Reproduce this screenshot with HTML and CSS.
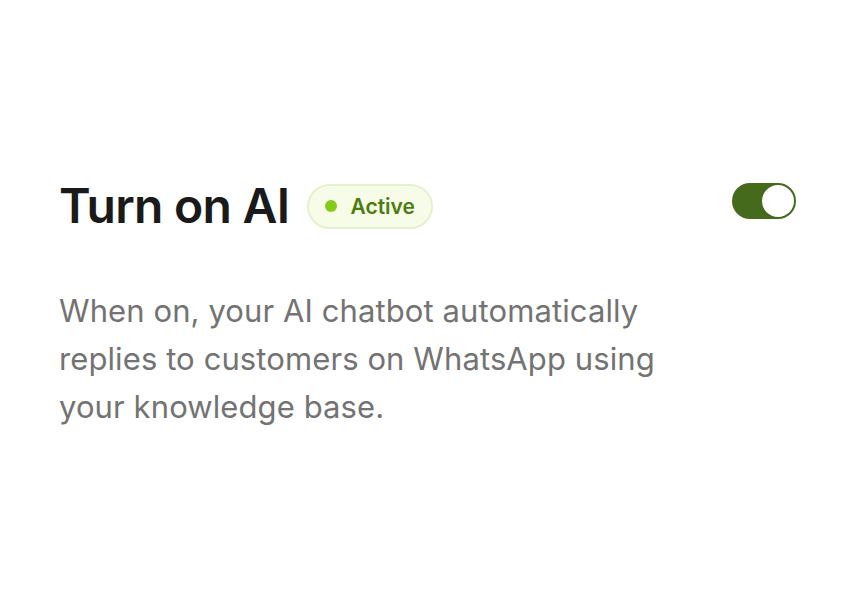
FILE: index.html
```html
<!DOCTYPE html>
<html lang="en">
<head>
  <meta charset="UTF-8">
  <title>AI Settings</title>
  <link rel="stylesheet" href="styles.css">
</head>
<body>
  <div class="setting-card">
    <div class="setting-head">
      <div class="title-group">
        <h1 class="setting-title">Turn on AI</h1>
        <span class="status-badge"><span class="status-dot"></span>Active</span>
      </div>
      <button class="toggle is-on" aria-label="Turn on AI"><span class="toggle-knob"></span></button>
    </div>
    <p class="setting-desc">When on, your AI chatbot automatically replies to customers on WhatsApp using your knowledge base.</p>
  </div>
</body>
</html>
```

FILE: styles.css
```css
body {
  margin: 0;
  background: #fff;
  font-family: 'Inter', 'Noto Sans', sans-serif;
}
.setting-card {
  padding: 177px 56px 0 59px;
}
.setting-head {
  display: flex;
  justify-content: space-between;
  align-items: flex-start;
}
.title-group {
  display: flex;
  align-items: center;
  gap: 18px;
}
.setting-title {
  margin: 0;
  font-size: 48px;
  font-weight: 600;
  line-height: 58px;
  color: #1a1a1a;
  letter-spacing: -0.7px;
}
.status-badge {
  display: inline-flex;
  align-items: center;
  gap: 13px;
  padding: 6px 16px;
  border: 2px solid #e4f2cc;
  border-radius: 999px;
  background: #f7fce9;
  color: #4d7c0f;
  font-size: 21px;
  font-weight: 600;
  line-height: 29px;
}
.status-dot {
  width: 12px;
  height: 12px;
  border-radius: 50%;
  background: #84cc16;
}
.toggle {
  margin-top: 6px;
  width: 64px;
  height: 36px;
  padding: 2px;
  border: 0;
  border-radius: 18px;
  background: #466a1b;
  display: flex;
  justify-content: flex-end;
  cursor: pointer;
}
.toggle-knob {
  width: 32px;
  height: 32px;
  border-radius: 50%;
  background: #fff;
}
.setting-desc {
  margin: 52px 0 0;
  max-width: 640px;
  font-size: 31px;
  letter-spacing: 0.1px;
  line-height: 48px;
  color: #737373;
}
```
